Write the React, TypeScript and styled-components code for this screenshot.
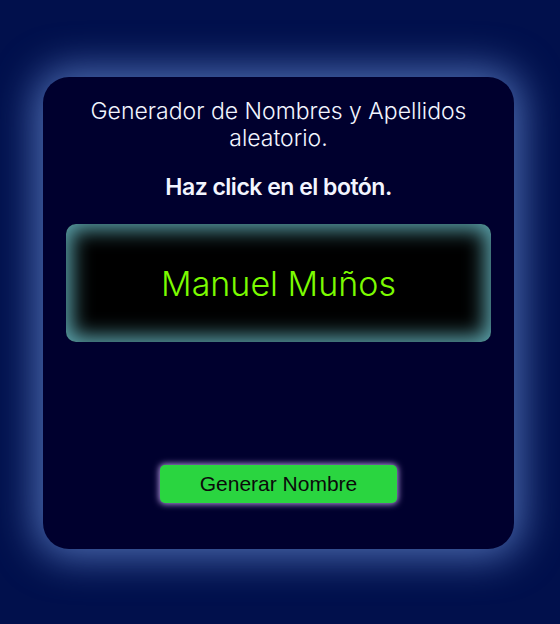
import React, { useState } from "react";
import styled, { createGlobalStyle } from "styled-components";

const GlobalStyle = createGlobalStyle`
  html, body { margin: 0; padding: 0; }
  body {
    background: #01104c;
    font-family: "Inter", "Noto Sans", sans-serif;
  }
`;

const Page = styled.div`
  min-height: 624px;
  box-sizing: border-box;
  padding: 2px 3px 0 0;
  display: flex;
  align-items: center;
  justify-content: center;
`;

const Card = styled.main`
  width: 471px;
  height: 472px;
  box-sizing: border-box;
  background: #00002e;
  border-radius: 26px;
  box-shadow: 0 0 40px 8px #4d6db2;
  padding: 21px 23px 0;
  display: flex;
  flex-direction: column;
  align-items: center;
`;

const Title = styled.h1`
  margin: 0;
  font-size: 23px;
  font-weight: 300;
  line-height: 27px;
  color: #f2f5ff;
  text-align: center;
  max-width: 410px;
`;

const Subtitle = styled.h2`
  margin: 22px 0 0;
  font-size: 23px;
  font-weight: 600;
  line-height: 27px;
  letter-spacing: -0.5px;
  color: #f2f5ff;
  text-align: center;
`;

const Display = styled.div`
  margin-top: 23px;
  width: 100%;
  height: 118px;
  border-radius: 10px;
  background: #000;
  box-shadow: inset 0 0 20px 6px #5ba2ab;
  display: flex;
  align-items: center;
  justify-content: center;
`;

const NameText = styled.span`
  color: #7cfc00;
  font-size: 34px;
  font-weight: 300;
`;

const Button = styled.button`
  margin-top: 123px;
  width: 237px;
  height: 38px;
  border: none;
  border-radius: 5px;
  background: #2ad540;
  box-shadow: 0 0 6px 1px #b99be6;
  font-family: "Liberation Sans", Arial, sans-serif;
  font-size: 21px;
  color: #0a0a0a;
  cursor: pointer;
`;

const nombres = ["Manuel", "Lucía", "Carlos", "Ana", "Javier", "Sofía"];
const apellidos = ["Muños", "García", "López", "Pérez", "Sánchez", "Díaz"];

export default function App() {
  const [name, setName] = useState("Manuel Muños");
  const generar = () => {
    const n = nombres[Math.floor(Math.random() * nombres.length)];
    const a = apellidos[Math.floor(Math.random() * apellidos.length)];
    setName(`${n} ${a}`);
  };
  return (
    <>
      <GlobalStyle />
      <Page>
        <Card>
          <Title>Generador de Nombres y Apellidos aleatorio.</Title>
          <Subtitle>Haz click en el botón.</Subtitle>
          <Display>
            <NameText>{name}</NameText>
          </Display>
          <Button onClick={generar}>Generar Nombre</Button>
        </Card>
      </Page>
    </>
  );
}
